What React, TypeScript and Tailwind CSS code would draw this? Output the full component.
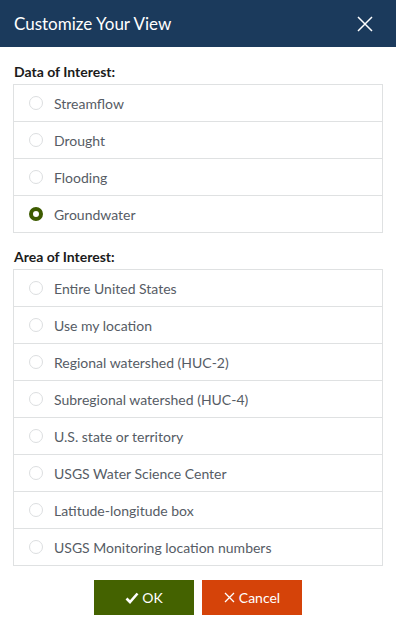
import React, { useState } from "react";

const data = ["Streamflow", "Drought", "Flooding", "Groundwater"];
const areas = [
  "Entire United States",
  "Use my location",
  "Regional watershed (HUC-2)",
  "Subregional watershed (HUC-4)",
  "U.S. state or territory",
  "USGS Water Science Center",
  "Latitude-longitude box",
  "USGS Monitoring location numbers",
];

function Radio({ checked }: { checked: boolean }) {
  return checked ? (
    <span className="block w-[14px] h-[14px] rounded-full border-[4px] border-[#3d5b00] bg-white shrink-0" />
  ) : (
    <span className="block w-[14px] h-[14px] rounded-full border border-[#dcdee0] bg-white shrink-0" />
  );
}

function List({ items, selected, onSelect }: { items: string[]; selected: string; onSelect: (s: string) => void }) {
  return (
    <div className="border border-[#dfe1e2]">
      {items.map((it, i) => (
        <div
          key={it}
          onClick={() => onSelect(it)}
          className={`flex items-center pl-[15px] gap-[11px] text-[14px] text-[#565c65] ${i > 0 ? "h-[37px] border-t border-[#dfe1e2]" : "h-[36px]"}`}
        >
          <Radio checked={selected === it} />
          <span>{it}</span>
        </div>
      ))}
    </div>
  );
}

export default function App() {
  const [d, setD] = useState("Groundwater");
  const [a, setA] = useState("");
  return (
    <div className="w-[396px] h-[627px] bg-white" style={{ fontFamily: "Lato, 'Noto Sans', sans-serif" }}>
      <div className="h-[47px] bg-[#1b3a5c] flex items-center justify-between pl-[14px] pr-[23px]">
        <span className="text-white text-[17px]">Customize Your View</span>
        <svg width="16" height="16" viewBox="0 0 16 16" className="text-white">
          <path d="M1 1L15 15M15 1L1 15" stroke="currentColor" strokeWidth="1.5" />
        </svg>
      </div>
      <div className="px-[13px]">
        <div className="pt-[14px] pb-[2px] pl-[1px] text-[14px] leading-[21px] font-bold text-[#1b1b1b]">Data of Interest:</div>
        <List items={data} selected={d} onSelect={setD} />
        <div className="pt-[13px] pb-[2px] pl-[1px] text-[14px] leading-[21px] font-bold text-[#1b1b1b]">Area of Interest:</div>
        <List items={areas} selected={a} onSelect={setA} />
        <div className="flex justify-center gap-[8px] mt-[14px]">
          <button className="w-[100px] h-[35px] bg-[#446200] text-white text-[14px] flex items-center justify-center gap-[3px]">
            <svg width="14" height="12" viewBox="0 0 14 12">
              <path d="M1.5 6.5L5 10L12.5 1.5" stroke="white" strokeWidth="2.6" fill="none" />
            </svg>
            OK
          </button>
          <button className="w-[100px] h-[35px] bg-[#d54309] text-white text-[14px] flex items-center justify-center gap-[4px]">
            <svg width="11" height="11" viewBox="0 0 11 11">
              <path d="M1 1L10 10M10 1L1 10" stroke="white" strokeWidth="1.3" />
            </svg>
            Cancel
          </button>
        </div>
      </div>
    </div>
  );
}
